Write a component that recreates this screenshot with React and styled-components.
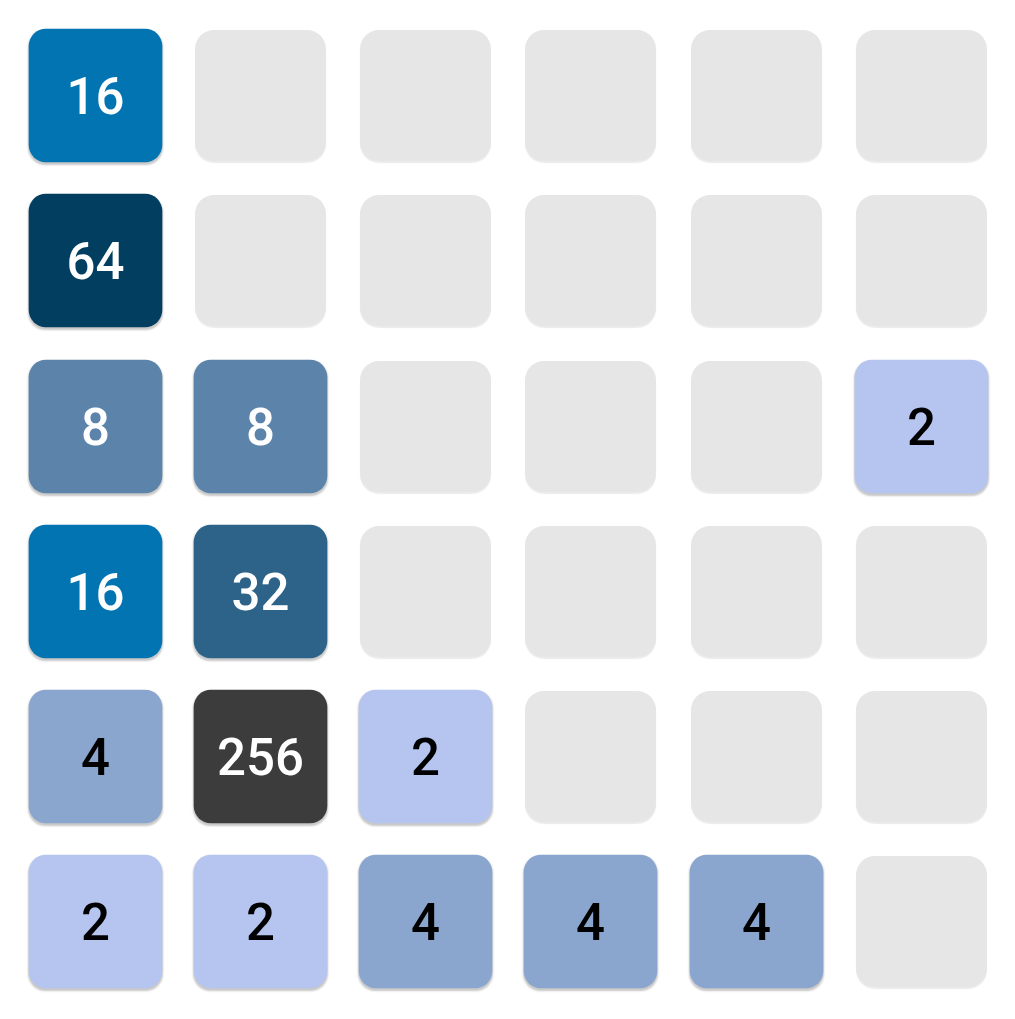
import React from "react";
import styled, { createGlobalStyle } from "styled-components";

const Global = createGlobalStyle`
  html, body { margin: 0; padding: 0; background: #ffffff; }
  body { font-family: Roboto, "Liberation Sans", sans-serif; }
`;

const Board = styled.div`
  display: grid;
  grid-template-columns: repeat(6, 131px);
  grid-auto-rows: 131px;
  gap: 34.3px;
  padding: 30px 0 0 29.5px;
  width: 1015px;
  height: 1019px;
  box-sizing: border-box;
`;

const COLORS = {
  0: ["#e6e6e6", "#000"],
  2: ["#b5c5f0", "#000"],
  4: ["#8ba6ce", "#000"],
  8: ["#5c84ab", "#fff"],
  16: ["#0374b2", "#fff"],
  32: ["#2e6389", "#fff"],
  64: ["#023e60", "#fff"],
  256: ["#3c3c3c", "#fff"],
};

const Tile = styled.div`
  display: flex;
  align-items: center;
  justify-content: center;
  padding-top: 3px;
  box-sizing: border-box;
  border-radius: ${(p) => (p.$v ? "17px" : "19px")};
  background: ${(p) => COLORS[p.$v][0]};
  color: ${(p) => COLORS[p.$v][1]};
  font-size: 50px;
  font-weight: 500;
  transform: ${(p) => (p.$v ? "scale(1.02)" : "none")};
  box-shadow: ${(p) =>
    p.$v ? "0 2px 2px rgba(0,0,0,0.22)" : "0 2px 1px rgba(0,0,0,0.08)"};
`;

const grid = [
  [16, 0, 0, 0, 0, 0],
  [64, 0, 0, 0, 0, 0],
  [8, 8, 0, 0, 0, 2],
  [16, 32, 0, 0, 0, 0],
  [4, 256, 2, 0, 0, 0],
  [2, 2, 4, 4, 4, 0],
];

export default function App() {
  return (
    <>
      <Global />
      <Board>
        {grid.flat().map((v, i) => (
          <Tile key={i} $v={v}>
            {v ? v : ""}
          </Tile>
        ))}
      </Board>
    </>
  );
}
